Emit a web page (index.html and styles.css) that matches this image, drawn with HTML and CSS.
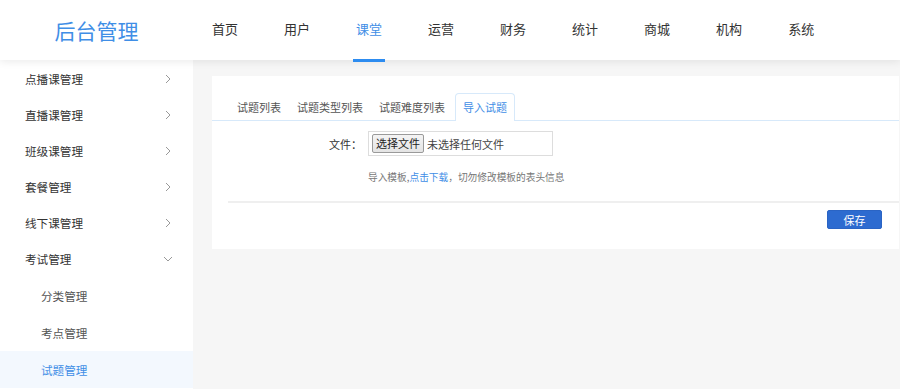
FILE: index.html
```html
<!DOCTYPE html>
<html>
<head>
    <title>后台管理</title>
    <meta charset="utf-8">
    <meta name="viewport" content="width=device-width, initial-scale=1.0">
    <link rel="stylesheet" href="styles.css">
</head>
<body>
    <div class="header">
        <div class="logo">后台管理</div>
        <ul class="nav">
            <li>首页</li>
            <li>用户</li>
            <li class="active">课堂</li>
            <li>运营</li>
            <li>财务</li>
            <li>统计</li>
            <li>商城</li>
            <li>机构</li>
            <li>系统</li>
        </ul>
    </div>

    <div class="layout">
        <ul class="sidebar">
            <li class="menu">点播课管理 <svg class="arrow" width="6" height="10" viewBox="0 0 6 10"><path d="M1 1l4 4-4 4" fill="none" stroke="#999" stroke-width="1"/></svg></li>
            <li class="menu">直播课管理 <svg class="arrow" width="6" height="10" viewBox="0 0 6 10"><path d="M1 1l4 4-4 4" fill="none" stroke="#999" stroke-width="1"/></svg></li>
            <li class="menu">班级课管理 <svg class="arrow" width="6" height="10" viewBox="0 0 6 10"><path d="M1 1l4 4-4 4" fill="none" stroke="#999" stroke-width="1"/></svg></li>
            <li class="menu">套餐管理 <svg class="arrow" width="6" height="10" viewBox="0 0 6 10"><path d="M1 1l4 4-4 4" fill="none" stroke="#999" stroke-width="1"/></svg></li>
            <li class="menu">线下课管理 <svg class="arrow" width="6" height="10" viewBox="0 0 6 10"><path d="M1 1l4 4-4 4" fill="none" stroke="#999" stroke-width="1"/></svg></li>
            <li class="menu">考试管理 <svg class="arrow down" width="10" height="6" viewBox="0 0 10 6"><path d="M1 1l4 4 4-4" fill="none" stroke="#999" stroke-width="1"/></svg></li>
            <li class="sub">分类管理</li>
            <li class="sub">考点管理</li>
            <li class="sub active">试题管理</li>
        </ul>

        <div class="main">
            <div class="card">
                <ul class="tabs">
                    <li>试题列表</li>
                    <li>试题类型列表</li>
                    <li>试题难度列表</li>
                    <li class="active">导入试题</li>
                </ul>

                <div class="form-row">
                    <label class="form-label">文件：</label>
                    <div class="file-box">
                        <span class="file-btn">选择文件</span>
                        <span class="file-name">未选择任何文件</span>
                    </div>
                </div>
                <p class="hint">导入模板,<a href="#">点击下载</a>，切勿修改模板的表头信息</p>

                <div class="footer">
                    <button class="save">保存</button>
                </div>
            </div>
        </div>
    </div>
</body>
</html>
```

FILE: styles.css
```css
* {
    box-sizing: border-box;
}

body {
    margin: 0;
    height: 389px;
    overflow: hidden;
    background-color: #f6f6f6;
    font-family: "Noto Sans CJK SC", "Noto Sans", sans-serif;
    color: #333;
}

ul {
    list-style: none;
    margin: 0;
    padding: 0;
}

/* top bar */
.header {
    position: relative;
    z-index: 2;
    display: flex;
    height: 60px;
    background-color: #fff;
    box-shadow: 0 2px 8px rgba(0, 0, 0, 0.08);
}

.logo {
    width: 193px;
    line-height: 60px;
    text-align: center;
    font-size: 21px;
    color: #3f8ee6;
}

.nav {
    display: flex;
    gap: 40px;
    padding-left: 16px;
}

.nav li {
    position: relative;
    padding: 0 3px;
    line-height: 58px;
    font-size: 13px;
    color: #333;
}

.nav li.active {
    color: #3f8ee6;
}

.nav li.active::after {
    content: "";
    position: absolute;
    left: 0;
    right: 0;
    bottom: -2px;
    height: 3px;
    background-color: #2d8cf0;
}

.layout {
    display: flex;
    height: 329px;
}

/* left menu */
.sidebar {
    width: 193px;
    padding-top: 1px;
    background-color: #fff;
}

.sidebar li {
    display: flex;
    align-items: center;
    justify-content: space-between;
    font-size: 11.6px;
}

.menu {
    height: 36px;
    padding: 0 22px 0 25px;
    color: #333;
}

.arrow.down {
    margin-right: -2px;
}

.sub {
    height: 37px;
    padding-left: 41px;
    color: #555;
}

.sub.active {
    background-color: #f3f8fe;
    color: #3f8ee6;
}

/* content */
.main {
    flex: 1;
    padding: 16px 1px 0 19px;
}

.card {
    background-color: #fff;
    padding-top: 17px;
    height: 173px;
}

.tabs {
    display: flex;
    padding-left: 17px;
    border-bottom: 1px solid #d7e9fa;
}

.tabs li {
    height: 27px;
    line-height: 27px;
    padding: 0 7px;
    font-size: 11px;
    color: #555;
    border: 1px solid transparent;
    border-bottom: none;
}

.tabs li.active {
    margin-left: 2px;
    color: #3f8ee6;
    background-color: #fff;
    border-color: #d7e9fa;
    border-radius: 4px 4px 0 0;
    margin-bottom: -1px;
    height: 28px;
}

.form-row {
    display: flex;
    align-items: center;
    margin-top: 10px;
}

.form-label {
    width: 156px;
    text-align: right;
    padding-right: 6px;
    font-size: 11px;
    color: #333;
}

.file-box {
    display: flex;
    align-items: center;
    width: 185px;
    height: 25px;
    padding: 0 3px;
    border: 1px solid #ddd;
}

.file-btn {
    height: 19px;
    line-height: 17px;
    padding: 0 3px;
    font-size: 11px;
    color: #222;
    background: linear-gradient(#f4f4f4, #e4e4e4);
    border: 1px solid #9a9a9a;
    border-radius: 2px;
}

.file-name {
    margin-left: 3px;
    font-size: 11px;
    color: #444;
}

.hint {
    margin: 14px 0 0 156px;
    font-size: 9.7px;
    color: #777;
}

.hint a {
    color: #3f8ee6;
    text-decoration: none;
}

.footer {
    display: flex;
    justify-content: flex-end;
    margin: 17px 0 0 16px;
    padding: 7px 17px 0 0;
    border-top: 2px solid #efefef;
}

.save {
    width: 55px;
    height: 19px;
    padding: 0;
    font-family: inherit;
    font-size: 11px;
    color: #fff;
    background-color: #2d6bd0;
    border: 1px solid #2a64c4;
    border-radius: 2px;
}
```
